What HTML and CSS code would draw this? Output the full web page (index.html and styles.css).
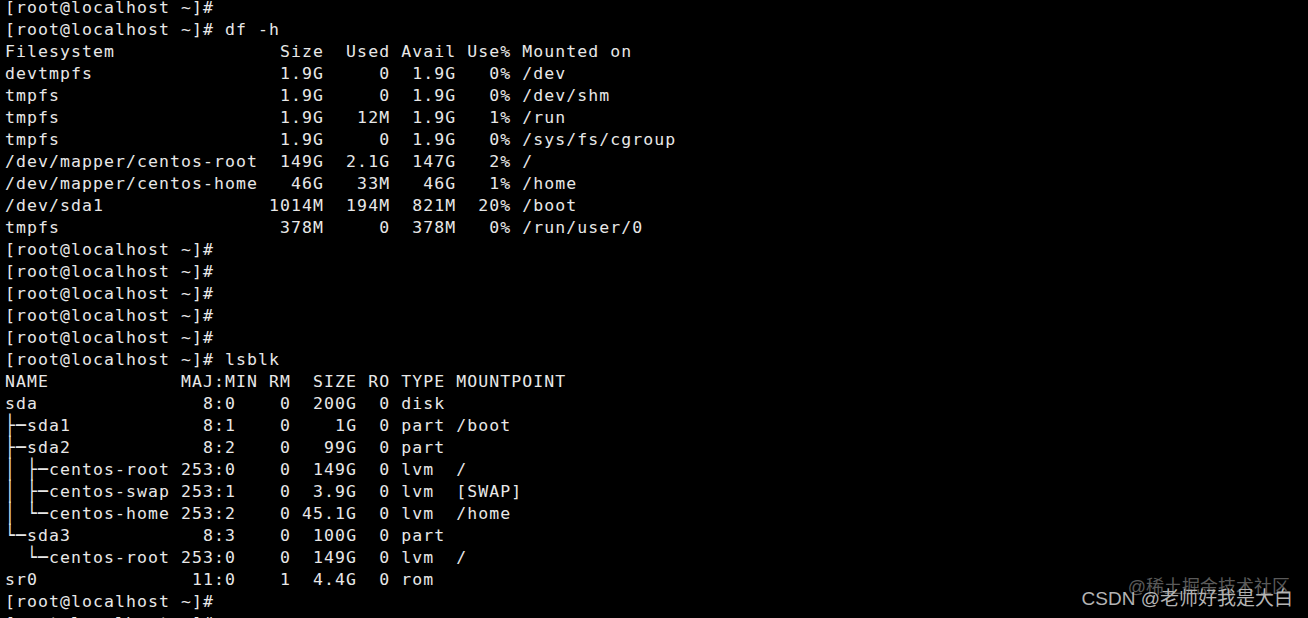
FILE: index.html
```html
<!DOCTYPE html>
<html>
<head>
<meta charset="utf-8">
<link rel="stylesheet" href="styles.css">
</head>
<body>
<main class="term">
<pre class="out">[root@localhost ~]#
[root@localhost ~]# df -h
Filesystem               Size  Used Avail Use% Mounted on
devtmpfs                 1.9G     0  1.9G   0% /dev
tmpfs                    1.9G     0  1.9G   0% /dev/shm
tmpfs                    1.9G   12M  1.9G   1% /run
tmpfs                    1.9G     0  1.9G   0% /sys/fs/cgroup
/dev/mapper/centos-root  149G  2.1G  147G   2% /
/dev/mapper/centos-home   46G   33M   46G   1% /home
/dev/sda1               1014M  194M  821M  20% /boot
tmpfs                    378M     0  378M   0% /run/user/0
[root@localhost ~]#
[root@localhost ~]#
[root@localhost ~]#
[root@localhost ~]#
[root@localhost ~]#
[root@localhost ~]# lsblk
NAME            MAJ:MIN RM  SIZE RO TYPE MOUNTPOINT
sda               8:0    0  200G  0 disk
<span class="bx">├─</span>sda1            8:1    0    1G  0 part /boot
<span class="bx">├─</span>sda2            8:2    0   99G  0 part
<span class="bx">│ ├─</span>centos-root 253:0    0  149G  0 lvm  /
<span class="bx">│ ├─</span>centos-swap 253:1    0  3.9G  0 lvm  [SWAP]
<span class="bx">│ └─</span>centos-home 253:2    0 45.1G  0 lvm  /home
<span class="bx">└─</span>sda3            8:3    0  100G  0 part
<span class="bx">  └─</span>centos-root 253:0    0  149G  0 lvm  /
sr0              11:0    1  4.4G  0 rom
[root@localhost ~]#
[root@localhost ~]#</pre>
<div class="mark">
  <span class="mark-juejin">@稀土掘金技术社区</span>
  <span class="mark-csdn">CSDN @老师好我是大白</span>
</div>
</main>
</body>
</html>
```
FILE: styles.css
```css
html, body {
  margin: 0;
  padding: 0;
  background: #000;
  height: 100%;
  overflow: hidden;
}
.term {
  position: relative;
  width: 1308px;
  height: 618px;
  background: #000;
  overflow: hidden;
}
.out {
  margin: -3px 0 0 0;
  padding: 0 0 0 5px;
  font-family: "DejaVu Sans Mono", monospace;
  font-size: 16.5px;
  letter-spacing: 1.07px;
  line-height: 22px;
  color: #e8e8e8;
}
.bx {
  display: inline-block;
  transform: scaleY(1.2);
}
.mark {
  position: absolute;
  right: 0;
  bottom: 8px;
  width: 240px;
  height: 40px;
  font-family: "Liberation Sans", "Noto Sans CJK SC", sans-serif;
}
.mark-juejin {
  position: absolute;
  right: 18px;
  top: 2px;
  font-size: 18px;
  color: #5a5a5a;
  white-space: nowrap;
}
.mark-csdn {
  position: absolute;
  right: 15px;
  top: 13px;
  font-size: 19px;
  color: #b4b4b4;
  white-space: nowrap;
}
```
